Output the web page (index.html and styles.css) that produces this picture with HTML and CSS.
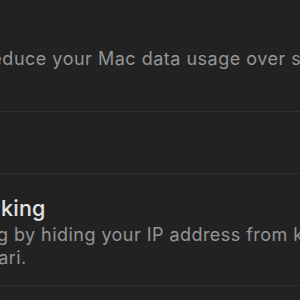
FILE: index.html
```html
<!DOCTYPE html>
<html lang="en">

<head>
    <meta charset="UTF-8">
    <meta name="viewport" content="width=device-width, initial-scale=1.0">
    <title>Wi-Fi details</title>
    <link rel="stylesheet" href="styles.css">
</head>

<body>
    <div class="list">
        <div class="row row-top">
            <div class="row-text">
                <span class="title">Low Data Mode</span>
                <span class="desc">Low Data Mode helps reduce your Mac data usage over specific Wi-Fi<br>networks.</span>
            </div>
        </div>
        <div class="row row-small">
            <span class="title">Proxies</span>
        </div>
        <div class="row">
            <div class="row-text">
                <span class="title">Limit IP address tracking</span>
                <span class="desc">Limit IP address tracking by hiding your IP address from known<br>trackers in Mail and Safari.</span>
            </div>
        </div>
    </div>
</body>
</html>
```

FILE: styles.css
```css
body {
    margin: 0;
    background: #222222;
    font-family: Inter, "Liberation Sans", sans-serif;
    overflow: hidden;
}

.list {
    width: 800px;
    margin-left: -212px;
}

.row {
    display: flex;
    align-items: flex-start;
    height: 111px;
    padding: 21px 0 0 0;
    border-bottom: 1px solid #313131;
    box-sizing: border-box;
}

.row-top {
    height: 112px;
    padding-top: 19px;
}

/* the first description sits a touch further left */
.row-top .desc {
    margin-left: -3px;
    letter-spacing: 0.5px;
}

.row-small {
    height: 62px;
    padding: 0;
    align-items: center;
}

.row:last-child {
    height: 112px;
}

.row-text {
    display: flex;
    flex-direction: column;
    gap: 2px;
}

.title {
    font-size: 21.5px;
    font-weight: 500;
    line-height: 26px;
    letter-spacing: 0.2px;
    color: #e2e2e2;
    white-space: nowrap;
}

.desc {
    font-size: 18px;
    line-height: 23px;
    letter-spacing: 0.45px;
    color: #959595;
    white-space: nowrap;
}
```
